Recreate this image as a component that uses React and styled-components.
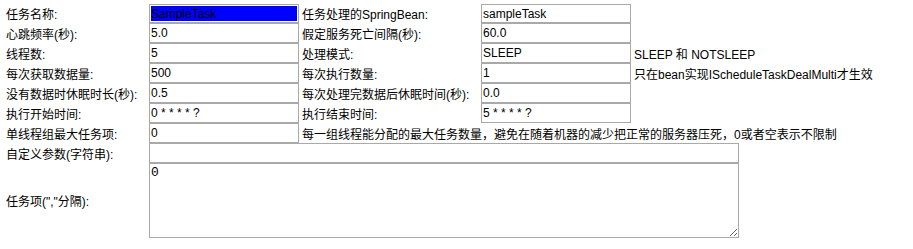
import React from 'react';
import styled, {createGlobalStyle} from 'styled-components';

const GlobalStyle = createGlobalStyle`
  html, body {
    margin: 0;
    padding: 0;
    background: #fff;
  }
  body {
    font-family: "Liberation Sans", "Noto Sans CJK SC", sans-serif;
    font-size: 12px;
    color: #000;
  }
`;

const Form = styled.div`
  display: grid;
  grid-template-columns: 146px 150px 182px 150px 1fr;
  grid-template-rows: 19px repeat(7, 20px) 75px;
  margin: 4px 0 0 3px;
`;

const Label = styled.div`
  display: flex;
  align-items: center;
  padding-left: 3px;
  white-space: nowrap;
  font-size: 12px;
  grid-column: ${p => p.$span || 'auto'};
`;

const Field = styled.input`
  display: block;
  width: ${p => (p.$wide ? '590px' : '100%')};
  height: 100%;
  box-sizing: border-box;
  margin: 0;
  padding: 0 1px;
  border: 1px solid #a9a9a9;
  border-radius: 0;
  outline: none;
  font: 12px "Liberation Sans", "Noto Sans CJK SC", sans-serif;
  color: #000;
  background: ${p => (p.$selected ? '#0000ff' : '#fff')};
  box-shadow: ${p => (p.$selected ? 'inset 0 0 0 1px #fff' : 'none')};
  grid-column: ${p => p.$span || 'auto'};
`;

const Area = styled.textarea`
  display: block;
  grid-column: 2 / 6;
  width: 590px;
  height: 75px;
  box-sizing: border-box;
  margin: 0;
  padding: 1px;
  border: 1px solid #a9a9a9;
  border-radius: 0;
  outline: none;
  font: 13px "Liberation Mono", monospace;
  color: #000;
`;

const rows = [
  ['任务名称:', 'SampleTask', '任务处理的SpringBean:', 'sampleTask', ''],
  ['心跳频率(秒):', '5.0', '假定服务死亡间隔(秒):', '60.0', ''],
  ['线程数:', '5', '处理模式:', 'SLEEP', 'SLEEP 和 NOTSLEEP'],
  ['每次获取数据量:', '500', '每次执行数量:', '1', '只在bean实现IScheduleTaskDealMulti才生效'],
  ['没有数据时休眠时长(秒):', '0.5', '每次处理完数据后休眠时间(秒):', '0.0', ''],
  ['执行开始时间:', '0 * * * * ?', '执行结束时间:', '5 * * * * ?', ''],
];

export default function App() {
  return (
    <>
      <GlobalStyle/>
      <Form>
        {rows.map(([l1, v1, l2, v2, hint], i) => (
          <React.Fragment key={i}>
            <Label>{l1}</Label>
            <Field defaultValue={v1} $selected={i === 0}/>
            <Label>{l2}</Label>
            <Field defaultValue={v2}/>
            <Label>{hint}</Label>
          </React.Fragment>
        ))}
        <Label>单线程组最大任务项:</Label>
        <Field defaultValue="0"/>
        <Label $span="3 / 6">每一组线程能分配的最大任务数量，避免在随着机器的减少把正常的服务器压死，0或者空表示不限制</Label>
        <Label>自定义参数(字符串):</Label>
        <Field defaultValue="" $span="2 / 6" $wide/>
        <Label>任务项(&quot;,&quot;分隔):</Label>
        <Area defaultValue="0"/>
      </Form>
    </>
  );
}
